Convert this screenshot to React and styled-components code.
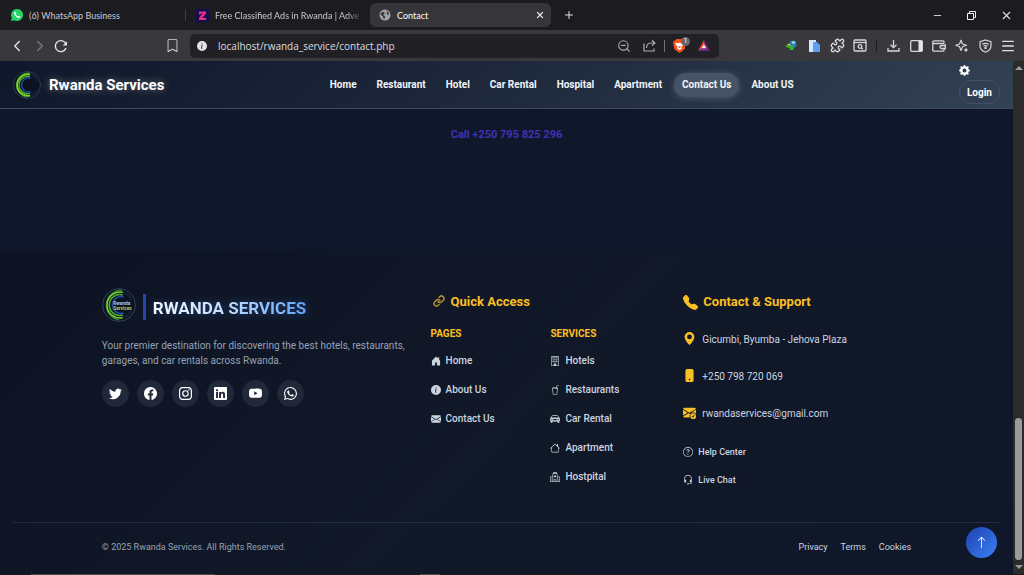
import React from 'react'
import styled, { createGlobalStyle } from 'styled-components'
import {
  BsTwitter, BsFacebook, BsInstagram, BsLinkedin, BsYoutube, BsWhatsapp,
  BsHouseDoorFill, BsInfoCircleFill, BsEnvelopeFill, BsBuilding, BsCupStraw,
  BsCarFrontFill, BsHouse, BsHospital, BsTelephoneFill, BsGeoAltFill,
  BsPhoneFill, BsEnvelopeCheckFill, BsQuestionCircle, BsHeadset, BsArrowUp,
  BsGearFill, BsBookmark,
} from 'react-icons/bs'
import {
  ChevronLeft, ChevronRight, Plus, X, Minus, ZoomOut, Link, Puzzle, Menu,
} from 'lucide-react'

const navLinks = ['Home', 'Restaurant', 'Hotel', 'Car Rental', 'Hospital', 'Apartment', 'Contact Us', 'About US']

const socials = [
  ['Twitter', BsTwitter],
  ['Facebook', BsFacebook],
  ['Instagram', BsInstagram],
  ['LinkedIn', BsLinkedin],
  ['YouTube', BsYoutube],
  ['WhatsApp', BsWhatsapp],
]

const pages = [
  ['Home', BsHouseDoorFill],
  ['About Us', BsInfoCircleFill],
  ['Contact Us', BsEnvelopeFill],
]

const services = [
  ['Hotels', BsBuilding],
  ['Restaurants', BsCupStraw],
  ['Car Rental', BsCarFrontFill],
  ['Apartment', BsHouse],
  ['Hostpital', BsHospital],
]

const contacts = [
  ['Gicumbi, Byumba - Jehova Plaza', BsGeoAltFill],
  ['+250 798 720 069', BsPhoneFill],
  ['rwandaservices@gmail.com', BsEnvelopeCheckFill],
]

function Logo({ size, label }) {
  return (
    <svg width={size} height={size} viewBox="0 0 36 36" fill="none" aria-hidden="true">
      <circle cx="18" cy="18" r="17.300" fill="#0b1322" stroke="#35465c" strokeWidth="1" />
      <path d="M21 2.500A15.700 15.700 0 0 0 18 33.700" stroke="#2f7f35" strokeWidth="1.600" />
      <path d="M22 4.500A13.800 13.800 0 1 0 22 31.500" stroke="#7ed321" strokeWidth={label ? 1.500 : 2.400} />
      <path d="M22 7.500A11 11 0 1 0 22 28.500" stroke="#4fae3a" strokeWidth="1.700" />
      <path d="M23 9.500A9 9 0 1 0 23 26.500" stroke="#1f4fa8" strokeWidth="1.500" />
      <path d="M23 4.500A14 14 0 0 1 31 13M31 24A14 14 0 0 1 23 31.500" stroke="#1d3563" strokeWidth="1" />
      {label && (
        <g fontFamily="Roboto, sans-serif" fontSize="5" fontWeight="700">
          <text x="12" y="18" fill="#b9c6d6">Rwanda</text>
          <text x="12" y="23" fill="#b5cf7a">Services</text>
        </g>
      )}
    </svg>
  )
}

function WhatsappMark() {
  return (
    <svg width="12" height="12" viewBox="0 0 16 16" aria-hidden="true">
      <path d="M8 0a8 8 0 0 0-6.900 12L0 16l4.100-1.100A8 8 0 1 0 8 0z" fill="#25d366" />
      <path d="M5.300 3.500c-1.300.7-1.500 2.100-.8 3.600 1.100 2.500 2.800 4.200 5.200 4.900 1.300.3 2.500-.5 2.700-1.900l-2.200-1.200-1 1.100C7.800 9.400 6.800 8.400 6.200 7l.9-1L6.200 3.500z" fill="#fff" />
    </svg>
  )
}

function ClassifiedMark() {
  return (
    <svg width="13" height="13" viewBox="0 0 13 13" aria-hidden="true">
      <rect width="13" height="13" rx="1" fill="#12104a" />
      <path d="M3 2.500h7v2L6.200 9H10v2H3V9l3.600-4.500H5L4.500 5.500H3z" fill="#ec2a8b" />
    </svg>
  )
}

function GlobeMark() {
  return (
    <svg width="12" height="12" viewBox="0 0 12 12" aria-hidden="true">
      <circle cx="6" cy="6" r="5.500" fill="#a4a4a8" />
      <path d="M2 3.500l3-.8.8 1.500L4.500 6l1.700 1.300L5.800 10 4 9 3.700 7 1.500 6zM7.200 1.500L10 3.800 9.500 6l-1.800-.6L8 3.800z" fill="#3b3b40" />
    </svg>
  )
}

function ReloadIcon() {
  return (
    <svg width="14" height="14" viewBox="0 0 14 14" fill="none" aria-hidden="true">
      <path d="M12 9a5.500 5.500 0 1 1-.5-4.800" stroke="#e4e4e6" strokeWidth="1.400" />
      <path d="M13 2.200v4.300H8.700z" fill="#e4e4e6" />
    </svg>
  )
}

function ShareIcon() {
  return (
    <svg width="13" height="13" viewBox="0 0 13 13" fill="none" stroke="#a9a9ad" strokeWidth="1.200" aria-hidden="true">
      <path d="M1 4.500V12h10V9.500" />
      <path d="M3.500 9c0-3.500 2-5 5-5h3M9 1.300L11.900 4 9 6.700" />
    </svg>
  )
}

function BraveMark() {
  return (
    <svg width="13" height="14" viewBox="0 0 14 15" aria-hidden="true">
      <path d="M4 0h6l1.500 1.500H13L14 4l-1.500 7L7 15l-5.500-4L0 4l1-2.500h1.500z" fill="#f4511e" />
      <path d="M3 4l2.500.5L7 4l1.500.5L11 4l.3 2L9 8.500 9.500 10 7 12l-2.500-2L5 8.500 2.700 6z" fill="#fff" />
      <path d="M5.500 7.500L7 8l1.500-.5L7.500 10h-1z" fill="#f4511e" />
    </svg>
  )
}

function BatMark() {
  return (
    <svg width="12" height="11" viewBox="0 0 13 12" aria-hidden="true">
      <path d="M6.500 0L0 12l6.500-3.800z" fill="#ff4724" />
      <path d="M6.500 0L13 12 6.500 8.200z" fill="#9e1f63" />
      <path d="M0 12h13L6.500 8z" fill="#662d91" />
      <path d="M6.500 4.500L4 9h5z" fill="#fff" />
    </svg>
  )
}

function DownloaderMark() {
  return (
    <svg width="12" height="11" viewBox="0 0 13 12" aria-hidden="true">
      <circle cx="8.500" cy="4.500" r="4" fill="#2f7fae" />
      <path d="M7 1.500l3-.5 1.500 2-3 1.500z" fill="#8fd3ee" />
      <path d="M0 5.500l3 1 4 .5 1-1.500L9.500 11l-5.500-.5L6 9 1 7.500z" fill="#2fc02c" />
      <path d="M2 4.500l3-.5 1 2-2 .5z" fill="#f1c52e" />
    </svg>
  )
}

function DocMark() {
  return (
    <svg width="11" height="12" viewBox="0 0 11 12" aria-hidden="true">
      <path d="M0 0h7v12H0z" fill="#d5e7fb" />
      <path d="M4 2h4l3 3v7H4z" fill="#5f9df0" />
    </svg>
  )
}

function CaptureIcon() {
  return (
    <svg width="14" height="13" viewBox="0 0 14 13" fill="none" stroke="#d6d6d9" strokeWidth="1.300" aria-hidden="true">
      <rect x="1" y="1" width="12" height="11" rx="1" />
      <path d="M1 3.500h12" />
      <circle cx="7" cy="7.500" r="1.800" />
      <path d="M8.300 8.800l1.500 1.500" />
    </svg>
  )
}

function DownloadIcon() {
  return (
    <svg width="13" height="13" viewBox="0 0 13 13" fill="none" stroke="#d6d6d9" strokeWidth="1.300" aria-hidden="true">
      <path d="M6.500 1v7.500M3.500 5.700l3 3 3-3M1 9v3h11V9" />
    </svg>
  )
}

function SidebarIcon() {
  return (
    <svg width="13" height="12" viewBox="0 0 13 12" aria-hidden="true">
      <rect x=".7" y=".7" width="11.600" height="10.600" rx="1" fill="none" stroke="#d6d6d9" strokeWidth="1.300" />
      <path d="M8.500 1h3.800v10H8.500z" fill="#e4e4e6" />
    </svg>
  )
}

function WalletIcon() {
  return (
    <svg width="14" height="12" viewBox="0 0 14 12" fill="none" stroke="#d6d6d9" strokeWidth="1.300" aria-hidden="true">
      <path d="M12 3.500V1.800a1 1 0 0 0-1-1H2a1.200 1.200 0 0 0-1.200 1.200v8.200a1 1 0 0 0 1 1H11a1 1 0 0 0 1-1V9M1 3.500h11" />
      <path d="M13.300 4v4.500H9.500a1.500 1.500 0 0 1 0-3h3.800" />
    </svg>
  )
}

function AssistantIcon() {
  return (
    <svg width="14" height="14" viewBox="0 0 14 14" aria-hidden="true">
      <path d="M6 1.200L7.500 5 11.500 6.300 7.500 7.800 6 11.500 4.500 7.800.8 6.300 4.500 5z" fill="none" stroke="#d6d6d9" strokeWidth="1.200" strokeLinejoin="round" />
      <path d="M11 8.500l.8 1.700 1.700.8-1.700.8-.8 1.700-.8-1.700-1.700-.8 1.700-.8z" fill="#d6d6d9" />
    </svg>
  )
}

function ShieldIcon() {
  return (
    <svg width="13" height="14" viewBox="0 0 13 14" fill="none" stroke="#d6d6d9" strokeWidth="1.200" aria-hidden="true">
      <path d="M6.500 1L12 2.800V7c0 3-2.300 5-5.500 6.200C3.300 12 1 10 1 7V2.800z" />
      <path d="M3.300 5.300q3.200-2 6.400 0M4.500 7.300q2-1.200 4 0" />
      <circle cx="6.500" cy="9" r=".6" />
    </svg>
  )
}

function RestoreIcon() {
  return (
    <svg width="9" height="9" viewBox="0 0 9 9" fill="none" stroke="#f2f2f2" aria-hidden="true">
      <path d="M.5 2.500h6v6h-6zM2.500 2.500v-2h6v6h-2" />
    </svg>
  )
}

function Browser() {
  return (
    <>
      <TabStrip>
        <Tab>
          <WhatsappMark />
          <TabTitle>(6) WhatsApp Business</TabTitle>
        </Tab>
        <TabDivider />
        <Tab>
          <ClassifiedMark />
          <TabTitle $fade>Free Classified Ads in Rwanda | Adve</TabTitle>
        </Tab>
        <Tab $active>
          <GlobeMark />
          <TabTitle>Contact</TabTitle>
          <IconButton aria-label="Close tab"><X size={10} strokeWidth={3} /></IconButton>
        </Tab>
        <NewTab aria-label="New tab"><Plus size={12} strokeWidth={2} /></NewTab>
        <WindowButtons>
          <IconButton aria-label="Minimize"><Minus size={11} strokeWidth={2} /></IconButton>
          <IconButton aria-label="Restore"><RestoreIcon /></IconButton>
          <IconButton aria-label="Close"><X size={13} strokeWidth={2} /></IconButton>
        </WindowButtons>
      </TabStrip>

      <Toolbar>
        <NavButtons>
          <IconButton aria-label="Back"><ChevronLeft size={18} strokeWidth={2} /></IconButton>
          <IconButton aria-label="Forward" $dim><ChevronRight size={18} strokeWidth={2} /></IconButton>
          <IconButton aria-label="Reload"><ReloadIcon /></IconButton>
        </NavButtons>
        <IconButton aria-label="Bookmark"><BsBookmark size={13} /></IconButton>
        <AddressBar>
          <BsInfoCircleFill size={10} />
          <Address aria-label="Address" defaultValue="localhost/rwanda_service/contact.php" />
          <AddressTools>
            <ZoomOut size={14} strokeWidth={2} />
            <ShareIcon />
            <ToolDivider />
            <Shield>
              <BraveMark />
              <Badge>1</Badge>
            </Shield>
            <BatMark />
          </AddressTools>
        </AddressBar>
        <Extensions>
          <IconButton aria-label="Download manager"><DownloaderMark /></IconButton>
          <IconButton aria-label="Documents"><DocMark /></IconButton>
          <IconButton aria-label="Extensions"><Puzzle size={15} strokeWidth={2} /></IconButton>
          <IconButton aria-label="Capture"><CaptureIcon /></IconButton>
          <ToolDivider $dark />
          <IconButton aria-label="Downloads"><DownloadIcon /></IconButton>
          <IconButton aria-label="Sidebar"><SidebarIcon /></IconButton>
          <IconButton aria-label="Wallet"><WalletIcon /></IconButton>
          <IconButton aria-label="Assistant"><AssistantIcon /></IconButton>
          <IconButton aria-label="VPN"><ShieldIcon /></IconButton>
          <IconButton aria-label="Menu"><Menu size={16} strokeWidth={2} /></IconButton>
        </Extensions>
      </Toolbar>
    </>
  )
}

function Header() {
  return (
    <StyledHeader>
      <Brand href="#">
        <Logo size={28} />
        Rwanda Services
      </Brand>
      <Nav>
        {navLinks.map((name) => (
          <NavLink href="#" key={name} $active={name === 'Contact Us'}>{name}</NavLink>
        ))}
      </Nav>
      <Account>
        <GearButton aria-label="Settings"><BsGearFill size={11} /></GearButton>
        <LoginButton>Login</LoginButton>
      </Account>
    </StyledHeader>
  )
}

function LinkList({ title, items }) {
  return (
    <div>
      <ListTitle>{title}</ListTitle>
      <List>
        {items.map(([name, Icon]) => (
          <li key={name}>
            <FooterLink href="#"><Icon size={10} />{name}</FooterLink>
          </li>
        ))}
      </List>
    </div>
  )
}

function Footer() {
  return (
    <StyledFooter>
      <Columns>
        <div>
          <FooterBrand>
            <Logo size={34} label />
            <Bar />
            <FooterName>RWANDA SERVICES</FooterName>
          </FooterBrand>
          <About>
            Your premier destination for discovering the best hotels, restaurants, garages, and car rentals across Rwanda.
          </About>
          <Socials>
            {socials.map(([name, Icon]) => (
              <Social href="#" key={name} aria-label={name}><Icon size={13} /></Social>
            ))}
          </Socials>
        </div>

        <div>
          <FooterTitle><ChainIcon size={12} strokeWidth={3} />Quick Access</FooterTitle>
          <Lists>
            <LinkList title="PAGES" items={pages} />
            <LinkList title="SERVICES" items={services} />
          </Lists>
        </div>

        <div>
          <FooterTitle><BsTelephoneFill size={15} />Contact &amp; Support</FooterTitle>
          <Contacts>
            {contacts.map(([name, Icon]) => (
              <Contact key={name}><Icon size={13} />{name}</Contact>
            ))}
          </Contacts>
          <Support>
            <FooterLink href="#" $small><BsQuestionCircle size={10} />Help Center</FooterLink>
            <FooterLink href="#" $small><BsHeadset size={10} />Live Chat</FooterLink>
          </Support>
        </div>
      </Columns>

      <Bottom>
        <BottomRow>
          <span>© 2025 Rwanda Services. All Rights Reserved.</span>
          <Legal>
            <a href="#">Privacy</a>
            <a href="#">Terms</a>
            <a href="#">Cookies</a>
          </Legal>
        </BottomRow>
      </Bottom>
    </StyledFooter>
  )
}

function App() {
  return (
    <Screen>
      <GlobalStyle />
      <Browser />
      <Viewport>
        <Page>
          <Header />
          <Call>
            <a href="#">Call +250 795 825 296</a>
          </Call>
          <Footer />
          <TopButton aria-label="Back to top"><BsArrowUp size={13} /></TopButton>
        </Page>
        <Scrollbar>
          <Arrow $up />
          <Track />
          <Thumb />
          <Arrow />
        </Scrollbar>
      </Viewport>
      <WindowEdge />
    </Screen>
  )
}

const GlobalStyle = createGlobalStyle`
  * {
    box-sizing: border-box;
  }

  body {
    margin: 0;
    background: #0f172a;
    font-family: Roboto, sans-serif;
  }

  a {
    color: inherit;
    text-decoration: none;
  }

  button {
    padding: 0;
    border: 0;
    background: none;
    color: inherit;
    font-family: inherit;
  }

  svg {
    flex-shrink: 0;
  }
`

const Screen = styled.div`
  display: flex;
  flex-direction: column;
  min-height: 100vh;
`

const TabStrip = styled.div`
  display: flex;
  align-items: center;
  height: 30px;
  padding-left: 4px;
  background: #1c1b20;
  color: #e6e6e8;
  font-family: Lato, sans-serif;
  font-size: 9px;
`

const Tab = styled.div`
  display: flex;
  align-items: center;
  gap: 6px;
  width: 181px;
  height: 24px;
  padding: 0 6px 0 ${(props) => (props.$active ? '9px' : '7px')};
  border-radius: 6px;
  background: ${(props) => (props.$active ? '#363539' : 'none')};
  color: ${(props) => (props.$active ? '#fff' : '#c9c9cc')};
`

const TabTitle = styled.span`
  flex: 1;
  white-space: nowrap;
  mask-image: ${(props) => (props.$fade ? 'linear-gradient(90deg, #000 88%, transparent)' : 'none')};
`

const TabDivider = styled.div`
  width: 1px;
  height: 12px;
  margin-right: 3px;
  background: #414045;
`

const IconButton = styled.button`
  display: flex;
  align-items: center;
  justify-content: center;
  color: ${(props) => (props.$dim ? '#77767b' : '#e0e0e3')};
`

const NewTab = styled(IconButton)`
  margin-left: 12px;
`

const WindowButtons = styled.div`
  display: flex;
  gap: 24px;
  margin-left: auto;
  padding-right: 11px;
`

const Toolbar = styled.div`
  display: flex;
  align-items: center;
  height: 31px;
  padding: 0 9px 0 8px;
  background: #39383c;
`

const NavButtons = styled.div`
  display: flex;
  gap: 5px;
  margin-right: 98px;
`

const AddressBar = styled.div`
  display: flex;
  flex: 1;
  align-items: center;
  height: 24px;
  margin-left: 11px;
  padding: 0 9px 0 7px;
  border-radius: 5px;
  background: #212025;
  color: #e4e4e6;
`

const Address = styled.input`
  flex: 1;
  min-width: 0;
  margin-left: 11px;
  padding: 0;
  border: 0;
  background: none;
  color: #dedee2;
  font-family: 'Open Sans', sans-serif;
  font-size: 10px;
  outline: none;
`

const AddressTools = styled.div`
  display: flex;
  align-items: center;
  gap: 8px;
  color: #a9a9ad;

  svg:first-child {
    margin-right: 4px;
  }
`

const ToolDivider = styled.div`
  width: 1px;
  height: 12px;
  background: ${(props) => (props.$dark ? '#1d1c20' : '#737277')};
`

const Shield = styled.div`
  position: relative;
  display: flex;
`

const Badge = styled.span`
  position: absolute;
  top: -2px;
  right: 0;
  width: 9px;
  height: 9px;
  border-radius: 50%;
  background: #66656b;
  color: #fff;
  font-size: 7px;
  line-height: 9px;
  text-align: center;
`

const Extensions = styled.div`
  display: flex;
  align-items: center;
  gap: 9px;
  margin-left: 65px;

  button {
    width: 14px;
  }
`

const Viewport = styled.div`
  display: flex;
  flex: 1;
`

const Page = styled.div`
  position: relative;
  display: flex;
  flex: 1;
  flex-direction: column;
  min-width: 0;
  background: #0f172a;
`

const StyledHeader = styled.header`
  display: flex;
  align-items: center;
  justify-content: space-between;
  height: 48px;
  padding: 0 13px;
  border-bottom: 1px solid #3d4a60;
  background: linear-gradient(135deg, #0f172a 0%, #1e293b 50%, #334155 100%);
`

const Brand = styled.a`
  display: flex;
  align-items: center;
  gap: 8px;
  color: #fff;
  font-size: 15px;
  font-weight: 700;
  text-shadow: 0 0 8px rgba(255, 255, 255, 0.4);
`

const Nav = styled.nav`
  display: flex;
  align-items: center;
  gap: 4px;
`

const NavLink = styled.a`
  padding: 0 8px;
  border-radius: 12px;
  background: ${(props) => (props.$active ? '#475264' : 'none')};
  box-shadow: ${(props) => (props.$active ? '0 1px 6px rgba(148, 163, 184, 0.35)' : 'none')};
  color: #f1f5f9;
  font-size: 10px;
  font-weight: 700;
  line-height: 24px;
`

const Account = styled.div`
  display: flex;
  flex-direction: column;
  align-items: flex-start;
  gap: 4px;
  color: #fff;
`

const GearButton = styled.button`
  display: flex;
`

const LoginButton = styled.button`
  height: 24px;
  padding: 0 7px;
  border: 1px solid #43506a;
  border-radius: 12px;
  font-size: 10px;
  font-weight: 700;
`

const Call = styled.section`
  min-height: 142px;
  padding-top: 19px;
  color: #4330b8;
  font-size: 11px;
  font-weight: 700;
  line-height: 14px;
  text-align: center;
`

const StyledFooter = styled.footer`
  display: flex;
  flex: 1;
  flex-direction: column;
  padding: 36px 13px 0;
  background: linear-gradient(135deg, #0d1322 0%, #111827 50%, #0f172a 100%);
  color: #cbd5e1;
`

const Columns = styled.div`
  display: grid;
  grid-template-columns: 4fr 3fr 3fr;
  gap: 25px;
  width: 82%;
  margin: 0 auto;
`

const FooterBrand = styled.div`
  display: flex;
  align-items: center;
  height: 36px;
`

const Bar = styled.div`
  width: 3px;
  height: 26px;
  margin: 4px 7px 0;
  background: #2346a8;
`

const FooterName = styled.h2`
  margin: 6px 0 0;
  background: linear-gradient(90deg, #f8fafc, #bfdbfe 50%, #60a5fa);
  background-clip: text;
  color: transparent;
  font-size: 17px;
  font-weight: 700;
  line-height: 24px;
  filter: drop-shadow(0 0 4px rgba(59, 130, 246, 0.4));
`

const About = styled.p`
  margin: 15px 0 12px;
  color: #94a3b8;
  font-size: 10px;
  line-height: 15px;
`

const Socials = styled.div`
  display: flex;
  gap: 8px;
`

const Social = styled.a`
  display: flex;
  align-items: center;
  justify-content: center;
  width: 27px;
  height: 27px;
  border-radius: 50%;
  background: #20283a;
  color: #fff;
`

const FooterTitle = styled.h3`
  display: flex;
  align-items: center;
  gap: 5px;
  margin: 7px 0 0;
  color: #fbbf24;
  font-size: 13px;
  font-weight: 700;
  line-height: 16px;
`

const ChainIcon = styled(Link)`
  margin: 0 1px 2px 2px;
  color: #b08f35;
`

const Lists = styled.div`
  display: grid;
  grid-template-columns: 1fr 1fr;
  gap: 12px;
  margin-top: 18px;
`

const ListTitle = styled.h4`
  margin: 0;
  color: #fbbf24;
  font-size: 10px;
  font-weight: 700;
  line-height: 12px;
`

const List = styled.ul`
  display: grid;
  gap: 15px;
  margin: 14px 0 0;
  padding: 0;
  list-style: none;
`

const FooterLink = styled.a`
  display: flex;
  align-items: center;
  gap: 5px;
  font-size: ${(props) => (props.$small ? '9px' : '10px')};
  font-weight: 500;
  line-height: 14px;
`

const Contacts = styled.ul`
  display: grid;
  gap: 21px;
  margin: 22px 0 0;
  padding: 0;
  list-style: none;
`

const Contact = styled.li`
  display: flex;
  gap: 6px;
  font-size: 10px;
  line-height: 16px;

  svg {
    color: #fbbf24;
  }
`

const Support = styled.div`
  display: grid;
  gap: 14px;
  margin-top: 23px;
`

const Bottom = styled.div`
  margin-top: auto;
  padding: 17px 0 20px;
  border-top: 1px solid #232c3e;
`

const BottomRow = styled.div`
  display: flex;
  justify-content: space-between;
  width: 82%;
  margin: 0 auto;
  color: #94a3b8;
  font-size: 9px;
  line-height: 14px;
`

const Legal = styled.div`
  display: flex;
  gap: 13px;
  color: #cbd5e1;
`

const TopButton = styled.button`
  position: absolute;
  right: 16px;
  bottom: 16px;
  display: flex;
  align-items: center;
  justify-content: center;
  width: 31px;
  height: 31px;
  border-radius: 50%;
  background: linear-gradient(135deg, #1e40af, #3b82f6);
  color: #fff;
`

const Scrollbar = styled.div`
  display: flex;
  flex-direction: column;
  align-items: center;
  width: 11px;
  padding: 5px 0;
  background: #2b2b2b;
`

const Arrow = styled.div`
  border: 4px solid transparent;
  border-${(props) => (props.$up ? 'bottom' : 'top')}-color: #9b9b9b;
  border-${(props) => (props.$up ? 'top' : 'bottom')}-width: 0;
`

const Track = styled.div`
  flex: 349;
`

const Thumb = styled.div`
  flex: 142;
  width: 7px;
  margin-bottom: 5px;
  border-radius: 4px;
  background: #9b9b9b;
`

// sliver of the windows behind the browser
const WindowEdge = styled.div`
  height: 1px;
  background: linear-gradient(
    90deg,
    #14181f 3%, #454a4c 3% 21%, #14181f 21% 41%, #454a4c 41% 43%, #14181f 43%
  );
`

export default App
